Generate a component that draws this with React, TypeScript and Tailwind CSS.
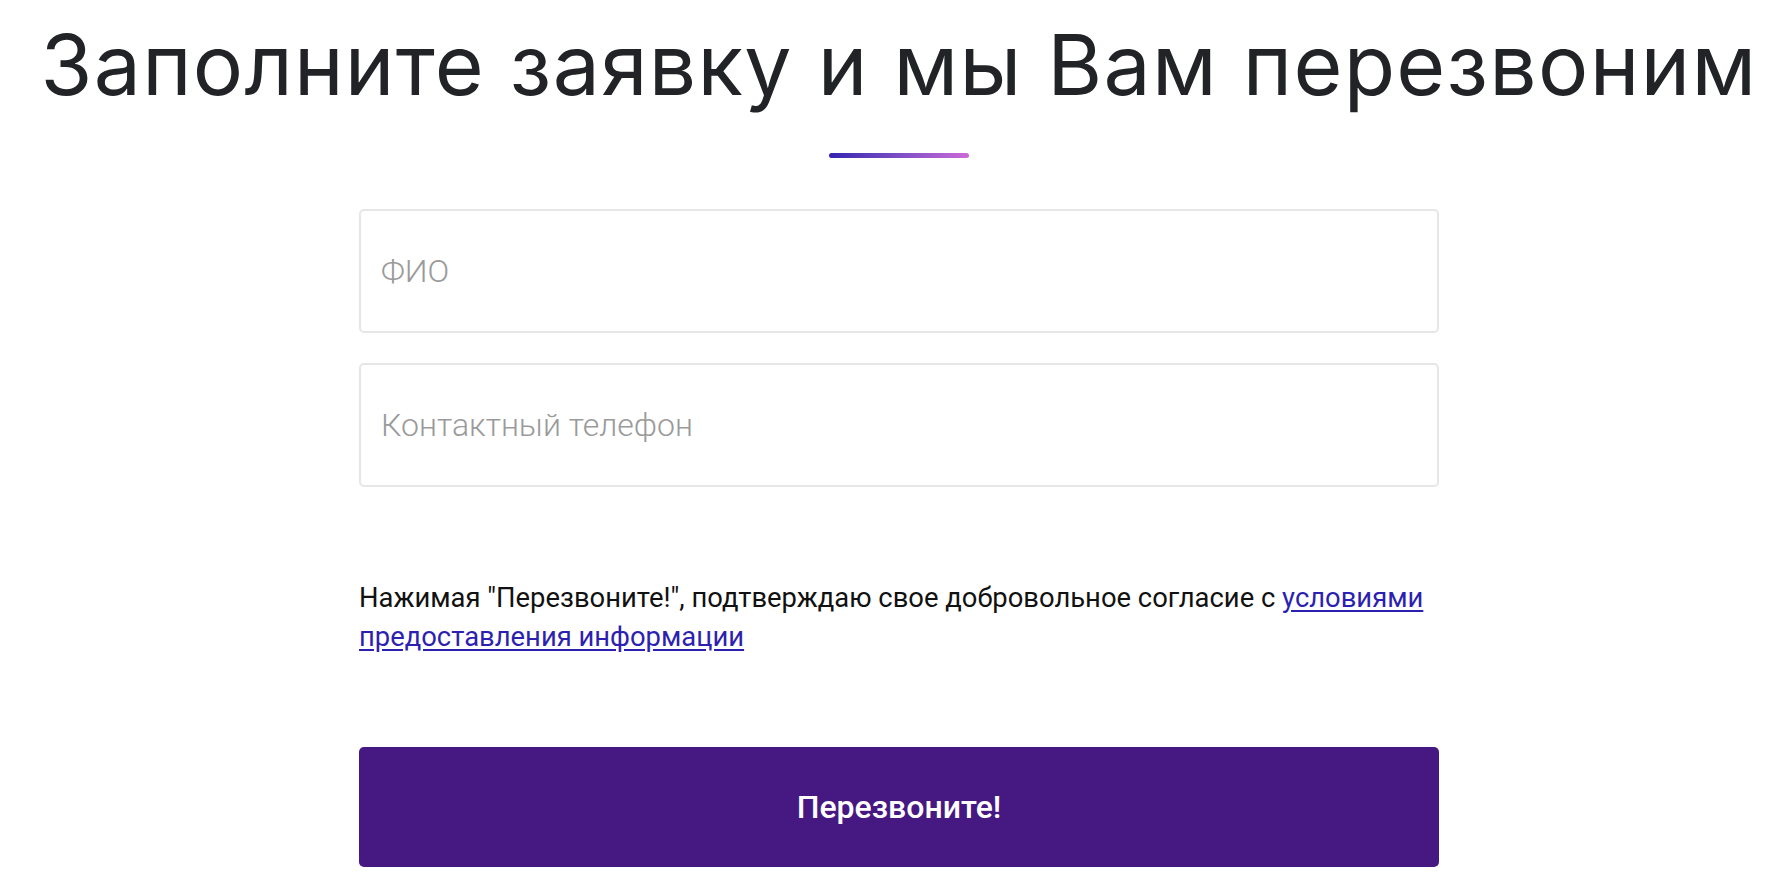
export default function App() {
  return (
    <div className="w-full min-h-[896px] bg-white pl-[8px]">
      <div className="flex flex-col items-center">
        <h1 className="mt-[11px] text-[84px] leading-[108px] font-normal text-[#222326] tracking-[1.25px] whitespace-nowrap [font-family:Inter,'Noto_Sans',sans-serif]">
          Заполните заявку и мы Вам перезвоним
        </h1>
        <div className="mt-[34px] h-[5px] w-[140px] rounded-full bg-gradient-to-r from-[#3522b0] to-[#cc6ad8]" />
        <form className="mt-[51px] w-[1080px] flex flex-col [font-family:Roboto,'Liberation_Sans',sans-serif]">
          <input
            type="text"
            placeholder="ФИО"
            className="h-[124px] w-full rounded-[5px] border-2 border-[#e6e6e6] px-[20px] text-[32px] font-light text-[#333] placeholder:text-[#9a9a9a] outline-none"
          />
          <input
            type="text"
            placeholder="Контактный телефон"
            className="mt-[30px] h-[124px] w-full rounded-[5px] border-2 border-[#e6e6e6] px-[20px] text-[32px] font-light text-[#333] placeholder:text-[#9a9a9a] outline-none"
          />
          <p className="mt-[92px] text-[27.4px] leading-[39px] text-[#111]">
            Нажимая "Перезвоните!", подтверждаю свое добровольное согласие с{" "}
            <a href="#" className="text-[#2d1fb0] underline underline-offset-[3px]">
              условиями предоставления информации
            </a>
          </p>
          <button
            type="button"
            className="mt-[90px] h-[120px] w-full rounded-[5px] bg-[#461881] text-[32px] font-medium text-white"
          >
            Перезвоните!
          </button>
        </form>
      </div>
    </div>
  );
}
